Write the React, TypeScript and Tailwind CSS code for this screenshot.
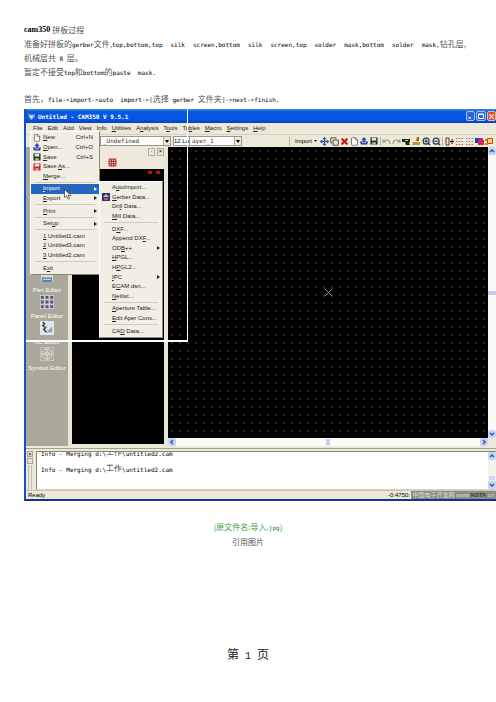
import {
  Copy,
  File,
  Grid3x3,
  Move,
  Redo,
  Undo,
  X,
  ZoomIn,
  ZoomOut,
} from "lucide-react"

const FILE_MENU = [
  { label: "&New", keys: "Ctrl+N", icon: "new" },
  { label: "&Open...", keys: "Ctrl+O", icon: "open" },
  { label: "&Save", keys: "Ctrl+S", icon: "save" },
  { label: "Save &As...", icon: "saveAs" },
  { label: "&Merge..." },
  null,
  { label: "&Import", sub: true, active: true },
  { label: "&Export", sub: true },
  null,
  { label: "&Print", sub: true },
  null,
  { label: "Set&up", sub: true },
  null,
  { label: "&1 Untitled1.cam" },
  { label: "&2 Untitled3.cam" },
  { label: "&3 Untitled2.cam" },
  null,
  { label: "E&xit" },
]

const IMPORT_MENU = [
  { label: "A&utoImport..." },
  { label: "&Gerber Data...", icon: "gerber" },
  { label: "Dri&ll Data..." },
  { label: "&Mill Data..." },
  null,
  { label: "D&XF..." },
  { label: "Append DX&F..." },
  { label: "OD&B++", sub: true },
  { label: "&HPGL..." },
  { label: "H&PGL2..." },
  { label: "&IPC", sub: true },
  { label: "E&CAM dsn..." },
  { label: "&Netlist..." },
  null,
  { label: "&Aperture Table..." },
  { label: "&Edit Aper Conv..." },
  null,
  { label: "CA&D Data..." },
]

const MENU_BAR = [
  "&File",
  "&Edit",
  "&Add",
  "&View",
  "&Info",
  "&Utilities",
  "A&nalysis",
  "T&ools",
  "Ta&bles",
  "&Macro",
  "&Settings",
  "&Help",
]

const LAYER_FILES = [
  "top,bottom,top",
  "silk",
  "screen,bottom",
  "silk",
  "screen,top",
  "solder",
  "mask,bottom",
  "solder",
  "mask,",
]

function Mnemonic({ text }: { text: string }) {
  const [before, after] = text.split("&")
  return (
    <span className="whitespace-pre">
      {before}
      <u>{after[0]}</u>
      {after.slice(1)}
    </span>
  )
}

function Latin({ children }: { children: string }) {
  return (
    <span className="font-['DejaVu_Sans_Mono','Liberation_Mono',monospace] text-[6px] text-black">
      {children}
    </span>
  )
}

function MenuIcon({ name }: { name?: string }) {
  if (name === "new") return <File className="h-2 w-2" fill="#fff" color="#444" />
  if (name === "open") return <OpenIcon />
  if (name === "save") return <Disk color="#26382b" />
  if (name === "saveAs") return <Disk color="#d3202a" />
  if (name === "gerber")
    return (
      <svg viewBox="0 0 8 8" className="h-2 w-2">
        <rect width="8" height="8" fill="#28318f" />
        <path d="M1 4l3-3 3 3z" fill="#f0c541" />
        <path d="M2 5h4v2H2z" fill="#c64f62" />
      </svg>
    )
  return null
}

function Disk({ color }: { color: string }) {
  return (
    <svg viewBox="0 0 9 9" className="h-2 w-2">
      <rect x="0.5" y="0.5" width="8" height="8" fill={color} />
      <path d="M2 1h5v3H2z" fill="#e2e8dc" />
      <path d="M2.5 6h4v2.5h-4z" fill="#b9c2b5" />
    </svg>
  )
}

function OpenIcon() {
  return (
    <svg viewBox="0 0 9 9" className="h-2 w-2">
      <path d="M4.5 0l3 3H6v2H3V3H1.5z" fill="#3546c4" />
      <path d="M0 5h9l-1 3.500H1z" fill="#24308e" />
      <path d="M2 6h5v1H2z" fill="#c8cdf2" />
    </svg>
  )
}

function Menu({ items, label }: { items: any[]; label: string }) {
  return (
    <ul
      aria-label={label}
      className="flex h-full flex-col border border-t-white border-r-[#8c8878] border-b-[#8c8878] border-l-white bg-[#f1efe3] py-px text-[#222]"
    >
      {items.map((item, i) =>
        item ? (
          <li key={i} className="flex min-h-0 flex-1">
            <button
              className={
                item.active
                  ? "flex w-full items-center bg-[#2666bd] pr-0.5 text-left text-white"
                  : "flex w-full items-center pr-0.5 text-left"
              }
            >
              <span className="flex w-3 shrink-0 justify-center">
                <MenuIcon name={item.icon} />
              </span>
              <Mnemonic text={item.label} />
              {item.keys && <span className="mr-1 ml-auto">{item.keys}</span>}
              {item.sub && (
                <svg viewBox="0 0 3 4" className="ml-auto h-1 w-[3px]">
                  <path d="M0 0l3 2-3 2z" fill="currentColor" />
                </svg>
              )}
            </button>
          </li>
        ) : (
          <li key={i} role="separator" className="mx-1 my-px h-px bg-[#cfccbe]" />
        )
      )}
    </ul>
  )
}

function TitleBar() {
  return (
    <div className="flex h-3.5 items-center bg-[linear-gradient(#3a8cf0,#0758dd_20%,#0455e8_75%,#0541bd)] pl-px">
      <svg viewBox="0 0 10 10" className="mr-0.5 h-[9px] w-[9px]">
        <path d="M1 1l3 2h3l2-1-1 4-3 3-3-3z" fill="#7fa6c4" />
        <path d="M3 4h4L5 8z" fill="#e6edf0" />
      </svg>
      <h1 className="font-['DejaVu_Sans_Mono','Liberation_Mono',monospace] text-[6px] font-bold text-white">
        Untitled - CAM350 V 9.5.1
      </h1>
      <div className="ml-auto flex gap-px">
        <button aria-label="Minimize" className="h-[10px] w-[9px] rounded-xs border border-[#a8c1f5] bg-[#2f62dc]">
          <svg viewBox="0 0 8 8">
            <path d="M1.500 5.500h3" stroke="#fff" strokeWidth="1.500" />
          </svg>
        </button>
        <button aria-label="Maximize" className="h-[10px] w-[10px] rounded-xs border border-[#a8c1f5] bg-[#2f62dc]">
          <svg viewBox="0 0 8 8">
            <path d="M1.500 2h5v4.500h-5z M1.500 2.500h5" fill="none" stroke="#fff" />
          </svg>
        </button>
        <button aria-label="Close" className="h-[10px] w-[9px] rounded-xs border border-[#efb7a5] bg-[#d9502d]">
          <svg viewBox="0 0 8 8">
            <path d="M1.500 1.500l5 5m0-5l-5 5" stroke="#fff" strokeWidth="1.300" />
          </svg>
        </button>
      </div>
    </div>
  )
}

function Combo({ label, value, width }: { label: string; value: string; width: string }) {
  return (
    <div className={`relative h-[10px] border border-[#9a988c] bg-white ${width}`}>
      <select
        aria-label={label}
        className="block h-full w-full appearance-none pl-0.5 font-['DejaVu_Sans_Mono',monospace] text-[6px] leading-2 text-[#333]"
      >
        <option>{value}</option>
      </select>
      <span className="pointer-events-none absolute top-0 right-0 flex h-full w-[7px] items-center justify-center border-l border-[#aaa799] bg-[#ece9d8]">
        <svg viewBox="0 0 4 3" className="h-[3px] w-1">
          <path d="M0 0h4L2 3z" />
        </svg>
      </span>
    </div>
  )
}

function DotsIcon() {
  return (
    <svg viewBox="0 0 9 9" className="h-[9px] w-[9px]">
      <path
        d="M1 1.500h7M1 4.500h7M1 7.500h7"
        stroke="#b56a72"
        strokeWidth="1.200"
        strokeDasharray="1.500 1.250"
      />
    </svg>
  )
}

function Separator() {
  return <span className="h-[9px] w-px bg-[#b9b6a6]" />
}

function Toolbar() {
  return (
    <div className="flex h-[13px] items-center border-t border-[#d6d2c2] bg-[#ece9d8]">
      <div className="flex pl-[74px]">
        <Combo label="D-code" value="_Undefined" width="w-[71px]" />
        <div className="ml-0.5 h-[10px] w-4 border border-r-0 border-[#9a988c] bg-white text-[6px] leading-2 whitespace-nowrap">
          12 La
        </div>
        <Combo label="Layer" value="ayer_1" width="w-[53px]" />
      </div>
      <div className="ml-auto flex items-center gap-px pr-0.5">
        <Separator />
        <button className="flex items-center gap-0.5 pr-0.5 pl-1 text-[6px]">
          Import
          <svg viewBox="0 0 4 3" className="h-0.5 w-[3px]">
            <path d="M0 0h4L2 3z" />
          </svg>
        </button>
        <button aria-label="Move"><Move className="h-[9px] w-[9px]" color="#35509c" strokeWidth={3} /></button>
        <button aria-label="Copy"><Copy className="h-[9px] w-[9px]" color="#66583e" strokeWidth={3} /></button>
        <button aria-label="Delete"><X className="h-[9px] w-[9px]" color="#c81624" strokeWidth={6} /></button>
        <button aria-label="New"><File className="h-[9px] w-[9px]" fill="#fff" color="#555" /></button>
        <button aria-label="Open"><OpenIcon /></button>
        <button aria-label="Save" className="px-px"><Disk color="#26382b" /></button>
        <Separator />
        <button aria-label="Undo"><Undo className="h-[9px] w-[9px]" color="#9a988a" strokeWidth={3} /></button>
        <button aria-label="Redo"><Redo className="h-[9px] w-[9px]" color="#9a988a" strokeWidth={3} /></button>
        <button aria-label="Redraw">
          <svg viewBox="0 0 9 9" className="h-[9px] w-[9px]">
            <path d="M0 2h8v3l-1 1 1 2H4L3 5H0z" fill="#1b2a20" />
            <path d="M3 3h3v1H3z" fill="#d5d944" />
          </svg>
        </button>
        <button aria-label="Clean">
          <svg viewBox="0 0 9 9" className="h-[9px] w-[9px]">
            <path d="M5 0h2v4H4z" fill="#8a6030" />
            <path d="M1 5h7v3H0z" fill="#c9903c" />
          </svg>
        </button>
        <button aria-label="Zoom in"><ZoomIn className="h-[9px] w-[9px]" color="#234" strokeWidth={3} /></button>
        <button aria-label="Zoom out"><ZoomOut className="h-[9px] w-[9px]" color="#234" strokeWidth={3} /></button>
        <Separator />
        <button aria-label="Snap" className="pl-px">
          <svg viewBox="0 0 9 9" className="h-[9px] w-[9px]">
            <path d="M1 1h3v7H1z" fill="none" stroke="#8c1f2d" />
            <path d="M5 4.500h4M7 2v5" stroke="#222" />
          </svg>
        </button>
        <button aria-label="Grid"><DotsIcon /></button>
        <button aria-label="Grid snap"><DotsIcon /></button>
        <button aria-label="Colors">
          <svg viewBox="0 0 9 9" className="h-[9px] w-[9px]">
            <path d="M0 1h6v5H0z" fill="#2937c0" />
            <path d="M3 3h6v5H3z" fill="#d82742" />
            <path d="M4 1h4v3H4z" fill="#9e32b0" />
          </svg>
        </button>
        <button aria-label="Highlight">
          <svg viewBox="0 0 9 9" className="h-[9px] w-[9px]">
            <path d="M2.500 1.500h5v5h-5z" fill="#f6e05a" stroke="#d83a27" />
            <path d="M0 2h2v2H0zM0 6h3v2H0z" fill="#e07c22" />
          </svg>
        </button>
      </div>
    </div>
  )
}

function Editors() {
  return (
    <nav className="w-[42px] shrink-0 bg-[#aaa79b] pt-[122px] text-center text-[6px] leading-2 whitespace-nowrap text-white">
      <a href="#part" className="flex h-[26px] flex-col items-center gap-[3px]">
        <svg viewBox="0 0 15 15" className="h-3.5 w-3.5">
          <path d="M1 2h13v12H1z" fill="#d5dde6" />
          <path d="M2 9h11v5H2z" fill="#64809b" />
          <path d="M3 11h9" stroke="#e9eef2" />
        </svg>
        Part Editor
      </a>
      <a href="#panel" className="flex h-[26px] flex-col items-center gap-[3px]">
        <svg viewBox="0 0 15 15" className="h-3.5 w-3.5">
          <rect width="15" height="15" fill="#c7c9cf" />
          <path d="M1 2.500h13M1 7.500h13M1 12.500h13" stroke="#4d5478" strokeWidth="3" strokeDasharray="3 2" />
          <path d="M2 2.500h12M2 7.500h12M2 12.500h12" stroke="#c04b62" strokeDasharray="1 4" />
        </svg>
        Panel Editor
      </a>
      <a href="#nc" className="flex h-[26px] flex-col items-center gap-[3px]">
        <svg viewBox="0 0 15 15" className="h-3.5 w-3.5">
          <rect width="15" height="15" fill="#dfe5ea" />
          <path d="M3 1l2 2-2 2 3 2-2 2 3 3" fill="none" stroke="#2c3a52" strokeWidth="1.500" />
          <path d="M7 12l6-6v6z" fill="#8e9cab" />
        </svg>
        NC Editor
      </a>
      <a href="#symbol" className="flex h-[26px] flex-col items-center gap-[3px]">
        <svg viewBox="0 0 15 15" className="h-3.5 w-3.5" fill="none" stroke="#e8e6df">
          <rect x="0.5" y="0.5" width="14" height="14" stroke="#c9c6bc" />
          <circle cx="7.500" cy="7.500" r="5.500" />
          <circle cx="7.500" cy="7.500" r="2.500" />
          <path d="M7.500 2v11M2 7.500h11" strokeDasharray="2 1" />
        </svg>
        Symbol Editor
      </a>
    </nav>
  )
}

function LayerPanel() {
  return (
    <aside className="flex w-[100px] shrink-0 flex-col border-r-4 border-b-2 border-l-4 border-[#e9e6d8] bg-black">
      <div className="flex h-[9px] items-center justify-end gap-0.5 bg-[#ece9d8]">
        <button aria-label="Roll up" className="h-2 w-[7px] border border-[#b1ae9f] text-[6px] leading-[5px]">·</button>
        <button aria-label="Close panel" className="h-2 w-[7px] border border-[#b1ae9f] text-[6px] leading-[5px]">×</button>
      </div>
      <div className="flex h-[13px] items-center bg-[#ece9d8] pl-9">
        <Grid3x3 className="h-[9px] w-[9px]" color="#b63c3c" strokeWidth={3} />
      </div>
      <div className="flex h-3 items-start justify-end gap-1 pt-0.5 pr-1">
        <span className="h-[3px] w-1 bg-[#b31313]" />
        <span className="h-[3px] w-1 bg-[#b31313]" />
      </div>
    </aside>
  )
}

function ScrollButton({ label, d }: { label: string; d: string }) {
  return (
    <button aria-label={label} className="flex h-2 w-2 shrink-0 items-center justify-center rounded-xs bg-[#c4d3fa]">
      <svg viewBox="0 0 6 6" className="h-[6px] w-[6px]">
        <path d={d} fill="none" stroke="#40588f" strokeWidth="1.500" />
      </svg>
    </button>
  )
}

const UP = "M1 4l2-2 2 2"
const DOWN = "M1 2l2 2 2-2"
const LEFT = "M4 1L2 3l2 2"
const RIGHT = "M2 1l2 2-2 2"

function Canvas() {
  return (
    <div className="grid min-w-0 flex-1 grid-cols-[1fr_8px] grid-rows-[1fr_8px]">
      <div className="flex items-center justify-center bg-black bg-[radial-gradient(circle_at_4px_4px,#4a4a46_0.5px,transparent_1px)] bg-[size:8px_8px]">
        <svg viewBox="0 0 9 9" className="h-[9px] w-[9px]">
          <path d="M0.500 0.500l8 8m0-8l-8 8" stroke="#8f8f88" />
        </svg>
      </div>
      <div className="flex flex-col items-center justify-between bg-[#fafaf6]">
        <ScrollButton label="Scroll up" d={UP} />
        <span className="h-1 w-full bg-[#cbc9f0]" />
        <ScrollButton label="Scroll down" d={DOWN} />
      </div>
      <div className="flex items-center justify-between bg-[#fafaf6]">
        <ScrollButton label="Scroll left" d={LEFT} />
        <span className="h-[6px] w-1 bg-[#bccdf6]" />
        <ScrollButton label="Scroll right" d={RIGHT} />
      </div>
      <div className="bg-[#ece9d8]" />
    </div>
  )
}

function LogLine() {
  return (
    <p className="flex h-4 items-center whitespace-pre text-[#333]">
      <Latin>{"Info - Merging d:\\"}</Latin>工作<Latin>{"\\untitled2.cam"}</Latin>
    </p>
  )
}

function Log() {
  return (
    <div className="flex h-[42px] gap-0.5 border-t border-[#a5a293] bg-[#ece9d8] pt-0.5">
      <div className="flex w-2 flex-col items-center gap-px">
        <button aria-label="Close log" className="h-[6px] w-[6px] border border-[#a5a293] text-[6px] leading-[3px]">×</button>
        <button aria-label="Expand log" className="h-[6px] w-[6px] border border-[#a5a293] text-[6px] leading-[3px]">·</button>
        <span className="w-1 flex-1 border-x border-[#c0bdae]" />
      </div>
      <div className="flex flex-1 items-start border border-r-0 border-[#85837a] border-b-[#d8d5c6] bg-white">
        <div className="flex h-full flex-1 flex-col overflow-hidden pl-1 text-[8px]">
          <div className="flex h-[9px] shrink-0 items-end overflow-hidden">
            <LogLine />
          </div>
          <LogLine />
        </div>
        <div className="flex h-full flex-col items-center justify-between bg-[#f4f3ea]">
          <ScrollButton label="Log up" d={UP} />
          <span className="mt-auto mb-px h-1 w-[6px] bg-[#c9d6fa]" />
          <ScrollButton label="Log down" d={DOWN} />
        </div>
      </div>
    </div>
  )
}

function CamWindow() {
  return (
    <section className="relative ml-6 overflow-hidden border-b-2 border-l-2 border-b-[#14309a] border-l-[#1550c4] bg-[#ece9d8] font-['Liberation_Sans',Arial,sans-serif] text-[6px] text-black">
      <TitleBar />
      <div className="flex h-[11px] items-center gap-[5px] pl-[7px] text-[#222]">
        {MENU_BAR.map((name) => (
          <button key={name}>
            <Mnemonic text={name} />
          </button>
        ))}
      </div>
      <Toolbar />
      <div className="flex h-[299px]">
        <Editors />
        <LayerPanel />
        <Canvas />
      </div>
      <div className="h-0.5" />
      <Log />
      <div className="flex h-[9px] items-center border-t border-[#c6c3b4]">
        <span className="pl-0.5">Ready</span>
        <span className="ml-auto pr-px">-0.4750:</span>
        <span className="flex h-full w-[85px] items-center justify-center bg-[#8d8c86] font-['Liberation_Sans','Noto_Sans_CJK_SC',sans-serif] text-[6px] whitespace-nowrap text-[#deddd6]">
          中国电子开发网 www.<b className="text-[#3b3b36]">NSTA</b>.cn
        </span>
      </div>

      {/* captured corner with the open menus */}
      <div className="pointer-events-none absolute top-0 left-0 h-[233px] w-[162px] border-r border-b-2 border-white" />
      <div className="absolute top-[22px] left-1 h-[144px] w-[70px]">
        <Menu items={FILE_MENU} label="File" />
      </div>
      <div className="absolute top-[72px] left-[73px] h-[157px] w-16">
        <Menu items={IMPORT_MENU} label="Import" />
      </div>
      <svg viewBox="0 0 8 11" className="pointer-events-none absolute top-[80px] left-[38px] h-[11px] w-2">
        <path d="M0.500 0.500v8l2-2 1.500 3.500 1.500-.5L4 6.500h3z" fill="#fff" stroke="#333" strokeWidth="0.700" />
      </svg>
    </section>
  )
}

export default function App() {
  return (
    <main className="min-h-screen bg-white pt-[22px] font-['Noto_Sans_CJK_SC',sans-serif] text-[8px] text-[#555]">
      <div className="flex flex-col pb-[3px] pl-6 whitespace-pre">
        <p className="flex h-[15px] items-center gap-0.5">
          <span className="font-['Liberation_Serif',serif] font-bold text-black">cam350</span>
          拼板过程
        </p>
        <p className="flex h-[14px] items-center">
          准备好拼板的<Latin>gerber</Latin>文件,
          <span className="flex gap-2">
            {LAYER_FILES.map((name, i) => (
              <Latin key={i}>{name}</Latin>
            ))}
          </span>
          钻孔层,
        </p>
        <p className="flex h-[14px] items-center">
          机械层共<Latin> 8 </Latin>层。
        </p>
        <p className="flex h-[14px] items-center">
          暂定不接受<Latin>top</Latin>和<Latin>bottom</Latin>的<Latin>paste  mask.</Latin>
        </p>
        <p className="mt-[13px] flex h-[14px] items-center">
          首先，<Latin>{"file->import->auto  import->["}</Latin>选择<Latin> gerber </Latin>文件夹
          <Latin>{"]->next->finish."}</Latin>
        </p>
      </div>
      <CamWindow />
      <div className="pt-[19px] text-center leading-[14px]">
        <p className="text-[#3b9a45]">
          (原文件名:导入.<span className="font-['DejaVu_Sans_Mono',monospace] text-[6px] text-[#1c7a28]">jpg</span>)
        </p>
        <p>引用图片</p>
      </div>
      <footer className="pt-[97px] pb-4 text-center text-[12px] leading-4 whitespace-pre text-[#222]">
        第<span className="font-['Liberation_Mono',monospace] text-[10px]"> 1 </span>页
      </footer>
    </main>
  )
}
